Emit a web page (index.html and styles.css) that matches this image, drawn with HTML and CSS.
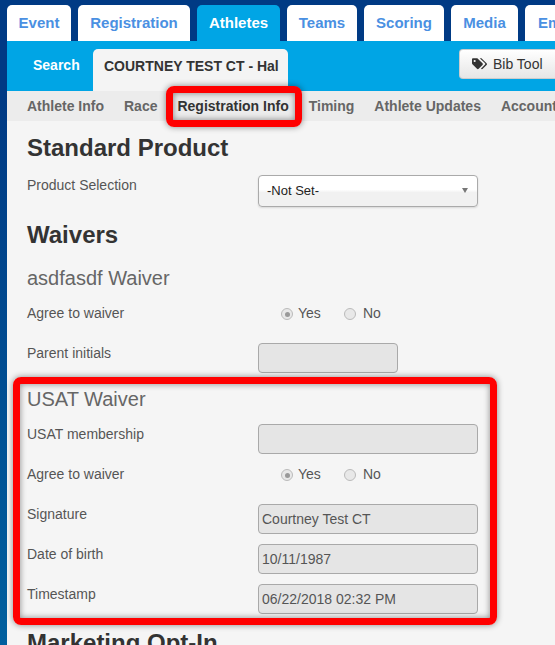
FILE: index.html
```html
<!DOCTYPE html>
<html lang="en">
<head>
<meta charset="utf-8">
<title>Athlete registration info</title>
<link rel="stylesheet" href="styles.css">
</head>
<body>
<div class="page">
  <nav class="main-tabs">
    <a class="main-tab tab-event">Event</a>
    <a class="main-tab tab-registration">Registration</a>
    <a class="main-tab tab-athletes active">Athletes</a>
    <a class="main-tab tab-teams">Teams</a>
    <a class="main-tab tab-scoring">Scoring</a>
    <a class="main-tab tab-media">Media</a>
    <a class="main-tab tab-email">Email</a>
  </nav>
  <div class="sub-bar">
    <a class="search-link">Search</a>
    <a class="person-tab">COURTNEY TEST CT - Hal</a>
    <button class="bib-btn" type="button">
      <svg class="tag-icon" viewBox="0 0 18 15" width="15" height="13" aria-hidden="true"><path d="M0 1.400C0 .6.6 0 1.400 0h4.300c.5 0 1 .2 1.300.5l5.600 5.600c.6.6.6 1.500 0 2l-4.600 4.600c-.6.6-1.500.6-2 0L.5 7.200C.2 6.900 0 6.400 0 5.900zM3.200 2a1.300 1.300 0 1 0 0 2.600 1.300 1.300 0 0 0 0-2.600z"/><path d="M9.300 0h1.300c.5 0 1 .2 1.300.5l5.600 5.600c.6.6.6 1.500 0 2l-4.600 4.600c-.6.6-1.500.6-2 0l-.2-.2 4.700-4.700c.6-.6.6-1.500 0-2z"/></svg>
      Bib Tool
    </button>
  </div>
  <nav class="third-bar">
    <a>Athlete Info</a>
    <a>Race</a>
    <a class="current">Registration Info</a>
    <a>Timing</a>
    <a>Athlete Updates</a>
    <a>Account</a>
  </nav>
  <main class="content">
    <h2 class="first">Standard Product</h2>
    <div class="row select-row">
      <label>Product Selection</label>
      <div class="select">-Not Set-<span class="caret"></span></div>
    </div>
    <h2 class="waivers">Waivers</h2>
    <h3>asdfasdf Waiver</h3>
    <div class="row radio-row">
      <label>Agree to waiver</label>
      <div class="radios">
        <span class="radio on"></span><span class="opt">Yes</span>
        <span class="radio"></span><span class="opt">No</span>
      </div>
    </div>
    <div class="row">
      <label>Parent initials</label>
      <div class="input short"></div>
    </div>
    <h3 class="usat">USAT Waiver</h3>
    <div class="row">
      <label>USAT membership</label>
      <div class="input"></div>
    </div>
    <div class="row radio-row">
      <label>Agree to waiver</label>
      <div class="radios">
        <span class="radio on"></span><span class="opt">Yes</span>
        <span class="radio"></span><span class="opt">No</span>
      </div>
    </div>
    <div class="row">
      <label>Signature</label>
      <div class="input">Courtney Test CT</div>
    </div>
    <div class="row">
      <label>Date of birth</label>
      <div class="input">10/11/1987</div>
    </div>
    <div class="row">
      <label>Timestamp</label>
      <div class="input">06/22/2018 02:32 PM</div>
    </div>
    <h2 class="marketing">Marketing Opt-In</h2>
  </main>
  <div class="callout callout-tab"></div>
  <div class="callout callout-usat"></div>
</div>
</body>
</html>
```
FILE: styles.css
```css
* { box-sizing: border-box; }
html, body { margin: 0; height: 100%; overflow: hidden; }
body {
  font-family: "Liberation Sans", Arial, sans-serif;
  background: #f5f5f5;
  color: #555;
}
.page {
  position: relative;
  width: 555px;
  height: 645px;
  overflow: hidden;
  padding-left: 7px;
  background: linear-gradient(180deg, #003a84 0, #003a84 100px, #00609f 100%);
}
.main-tabs {
  display: flex;
  gap: 7px;
  height: 41px;
  padding-top: 5px;
  white-space: nowrap;
  width: 600px;
}
.main-tab {
  display: block;
  flex: none;
  height: 36px;
  line-height: 36px;
  text-align: center;
  background: #fff;
  border-radius: 5px 5px 0 0;
  color: #4a90e2;
  font-size: 15px;
  font-weight: bold;
}
.tab-event { width: 64px; }
.tab-registration { width: 112px; }
.tab-athletes { width: 83px; }
.tab-teams { width: 70px; }
.tab-scoring { width: 80px; }
.tab-media { width: 67px; }
.tab-email { width: 66px; }
.main-tab.active { background: #00a5e5; color: #fff; }
.sub-bar {
  display: flex;
  align-items: flex-end;
  height: 50px;
  background: #00a5e5;
  position: relative;
}
.search-link {
  width: 86px;
  height: 42px;
  padding-left: 26px;
  color: #fff;
  font-size: 14px;
  font-weight: bold;
  line-height: 32px;
}
.person-tab {
  width: 195px;
  height: 42px;
  padding-left: 11px;
  background: #f4f4f4;
  border-radius: 5px 5px 0 0;
  color: #333;
  font-size: 14px;
  font-weight: bold;
  line-height: 35px;
  white-space: nowrap;
}
.bib-btn {
  display: flex;
  align-items: center;
  gap: 6px;
  margin: 0 0 12px auto;
  width: 96px;
  height: 30px;
  padding: 0 0 0 12px;
  border: 1px solid #ccc;
  border-right: 0;
  border-radius: 4px 0 0 4px;
  background: linear-gradient(180deg, #fff, #e6e6e6);
  color: #333;
  font: 14px "Liberation Sans", Arial, sans-serif;
  white-space: nowrap;
}
.tag-icon { fill: #333; flex: none; }
.third-bar {
  display: flex;
  gap: 20px;
  height: 30px;
  padding-left: 20px;
  background: #ececec;
  white-space: nowrap;
  width: 640px;
}
.third-bar a {
  color: #666;
  font-size: 14px;
  font-weight: bold;
  line-height: 30px;
}
.third-bar a.current { color: #333; }
.content {
  height: 524px;
  padding: 0 0 0 20px;
  background: #f5f5f5;
  overflow: hidden;
}
h2 {
  margin: 0;
  color: #333;
  font-size: 24px;
  font-weight: bold;
  line-height: 30px;
}
h2.first { padding-top: 12px; height: 44px; margin-bottom: 10px; }
h2.waivers { height: 30px; margin-top: 13px; }
h2.marketing { margin-top: 4px; }
h3 {
  margin: 15px 0 12px;
  color: #666;
  font-size: 20px;
  font-weight: normal;
  line-height: 26px;
}
h3.usat { margin: 0 0 12px; line-height: 26px; padding-top: 3px; }
.row {
  display: flex;
  height: 40px;
  align-items: flex-start;
}
.row label {
  width: 231px;
  flex: none;
  font-size: 14px;
  line-height: 20px;
  color: #555;
}
.input {
  width: 220px;
  height: 30px;
  padding: 0 3px;
  border: 1px solid #a9a9a9;
  border-radius: 4px;
  background: #e5e5e5;
  font-size: 14px;
  line-height: 29px;
  color: #555;
}
.input.short { width: 140px; }
.select-row { height: 32px; }
.select {
  position: relative;
  width: 220px;
  height: 32px;
  padding-left: 8px;
  border: 1px solid #aaa;
  border-radius: 4px;
  background: linear-gradient(180deg, #fff 0, #fff 45%, #f1f1f1 55%, #f1f1f1 100%);
  box-shadow: 0 1px 2px rgba(0,0,0,.12);
  color: #222;
  font-size: 13px;
  line-height: 29px;
}
.caret {
  position: absolute;
  right: 9px;
  top: 12px;
  border-left: 3.500px solid transparent;
  border-right: 3.500px solid transparent;
  border-top: 5px solid #777;
}
.radios {
  display: flex;
  align-items: center;
  padding-left: 23px;
  height: 20px;
  font-size: 14px;
  color: #555;
}
.radio {
  width: 12px;
  height: 12px;
  border: 1px solid #bbb;
  border-radius: 50%;
  background: #e8e8e8;
  margin-right: 5px;
  margin-top: 2px;
  flex: none;
  position: relative;
}
.radio.on::after {
  content: "";
  position: absolute;
  left: 2.500px;
  top: 2.500px;
  width: 5px;
  height: 5px;
  border-radius: 50%;
  background: #999;
}
.opt { width: 46px; }
.radios .opt:last-child { width: auto; margin-left: 2px; }
.callout {
  position: absolute;
  border: 7px solid #f00;
  border-radius: 8px;
  box-shadow: 0 0 6px rgba(0,0,0,.45), inset 0 0 6px rgba(0,0,0,.45);
  pointer-events: none;
}
.callout-tab { left: 166px; top: 86px; width: 136px; height: 41px; }
.callout-usat { left: 13px; top: 377px; width: 484px; height: 248px; }
```
